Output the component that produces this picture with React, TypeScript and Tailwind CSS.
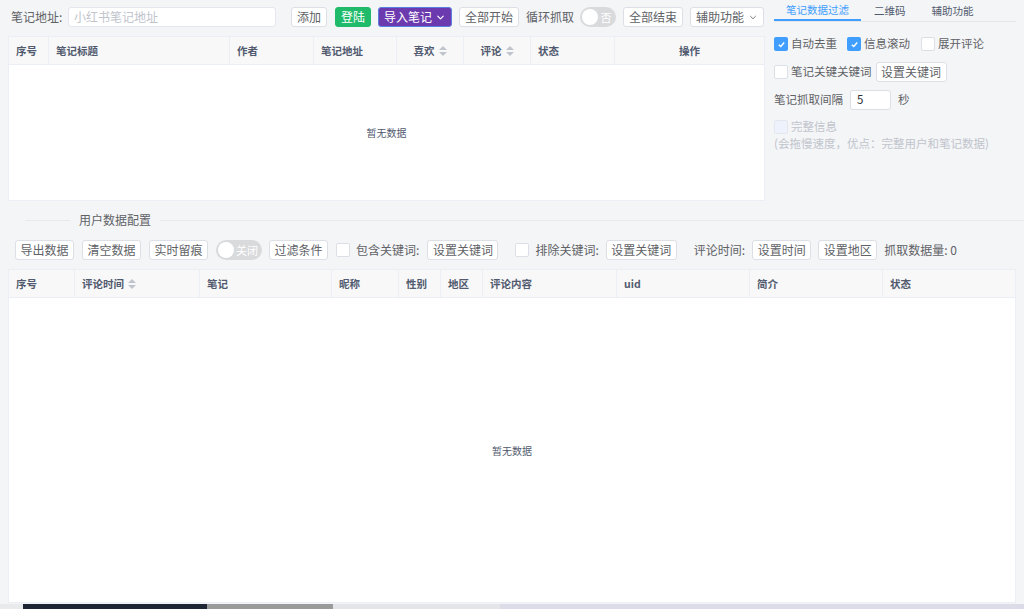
import { ChevronDown } from "lucide-react";
import type { ReactNode } from "react";

const font = { fontFamily: '"Noto Sans CJK SC", "Noto Sans", sans-serif' };

function Btn({
  children,
  className = "",
  wide = false,
}: {
  children: ReactNode;
  className?: string;
  wide?: boolean;
}) {
  return (
    <button
      className={`h-[20px] ${wide ? "px-[5px]" : "px-[4.5px]"} flex items-center shrink-0 border rounded-[3px] text-[12px] leading-none whitespace-nowrap ${
        className.includes("tone-") ? "" : "bg-white border-[#dcdfe6] text-[#606266]"
      } ${className}`}
    >
      {children}
    </button>
  );
}

function Check({ checked = false, disabled = false }: { checked?: boolean; disabled?: boolean }) {
  if (checked) {
    return (
      <span className="w-[14px] h-[14px] rounded-[2px] bg-[#409eff] flex items-center justify-center shrink-0">
        <svg width="9" height="9" viewBox="0 0 10 10">
          <path d="M2 5.2 L4.2 7.3 L8 2.8" fill="none" stroke="white" strokeWidth="1.6" />
        </svg>
      </span>
    );
  }
  return (
    <span
      className={`block w-[14px] h-[14px] rounded-[2px] border shrink-0 ${
        disabled ? "border-[#e4e7ed] bg-[#edf2fc]" : "border-[#dcdfe6] bg-white"
      }`}
    />
  );
}

function Toggle({ label, width }: { label: string; width: string }) {
  return (
    <span className={`h-[20px] ${width} rounded-full bg-[#d9dadc] flex items-center px-[2px] shrink-0`}>
      <span className="w-[16px] h-[16px] rounded-full bg-white" />
      <span className="flex-1 text-center text-[11px] leading-none text-white">{label}</span>
    </span>
  );
}

function SortIcon() {
  return (
    <span className="inline-flex flex-col gap-[2px] ml-[4px]">
      <span className="w-0 h-0 border-x-[4px] border-x-transparent border-b-[4px] border-b-[#c0c4cc]" />
      <span className="w-0 h-0 border-x-[4px] border-x-transparent border-t-[4px] border-t-[#c0c4cc]" />
    </span>
  );
}

type Col = { title: string; w: string; sort?: boolean; center?: boolean };

const noteCols: Col[] = [
  { title: "序号", w: "w-[40px]" },
  { title: "笔记标题", w: "w-[181px]" },
  { title: "作者", w: "w-[84px]" },
  { title: "笔记地址", w: "w-[83px]" },
  { title: "喜欢", w: "w-[67px]", sort: true, center: true },
  { title: "评论", w: "w-[67px]", sort: true, center: true },
  { title: "状态", w: "w-[84px]" },
  { title: "操作", w: "flex-1", center: true },
];

const userCols: Col[] = [
  { title: "序号", w: "w-[66px]" },
  { title: "评论时间", w: "w-[125px]", sort: true },
  { title: "笔记", w: "w-[132px]" },
  { title: "昵称", w: "w-[67px]" },
  { title: "性别", w: "w-[42px]" },
  { title: "地区", w: "w-[42px]" },
  { title: "评论内容", w: "w-[134px]" },
  { title: "uid", w: "w-[133px]" },
  { title: "简介", w: "w-[133px]" },
  { title: "状态", w: "flex-1" },
];

function Table({ cols, className }: { cols: Col[]; className: string }) {
  return (
    <div className={`flex flex-col bg-white border border-[#ebeef5] ${className}`}>
      <div className="flex h-[28px] bg-[#f8f8f9] border-b border-[#ebeef5] shrink-0">
        {cols.map((c, i) => (
          <div
            key={c.title}
            className={`${c.w} flex items-center px-[7px] text-[10.5px] font-semibold text-[#515a6e] ${
              c.center ? "justify-center" : ""
            } ${i < cols.length - 1 ? "border-r border-[#ebeef5]" : ""}`}
          >
            {c.title}
            {c.sort && <SortIcon />}
          </div>
        ))}
      </div>
      <div className="flex-1 flex items-center justify-center text-[10px] text-[#515a6e]">暂无数据</div>
    </div>
  );
}

export default function App() {
  return (
    <div style={font} className="w-[1024px] h-[609px] bg-[#f4f5f7] overflow-hidden flex flex-col">
      {/* note crawling area */}
      <div className="h-[210px] flex shrink-0">
        <div className="w-[757px] ml-[8px] flex flex-col">
          <div className="mt-[7px] h-[20px] flex items-center text-[12px] text-[#606266] whitespace-nowrap">
            <span className="ml-[3px] w-[57px] shrink-0">笔记地址:</span>
            <div className="w-[208px] h-[20px] shrink-0 bg-white border border-[#e4e7ed] rounded-[3px] flex items-center pl-[5px] text-[#c0c4cc]">
              小红书笔记地址
            </div>
            <Btn wide className="ml-[15px]">添加</Btn>
            <Btn wide className="tone- ml-[8px] bg-[#1fbb6a] border-[#1fbb6a] text-white">登陆</Btn>
            <Btn wide className="tone- ml-[7px] bg-[#6b3aae] border-[#5b7fe0] text-white gap-[3px]">
              导入笔记
              <ChevronDown size={11} strokeWidth={2.5} />
            </Btn>
            <Btn wide className="ml-[7px]">全部开始</Btn>
            <span className="ml-[7px] shrink-0">循环抓取</span>
            <span className="ml-[6px] shrink-0">
              <Toggle label="否" width="w-[36px]" />
            </span>
            <Btn wide className="ml-[7px]">全部结束</Btn>
            <Btn wide className="ml-[7px] gap-[4px] w-[74px] justify-center">
              辅助功能
              <ChevronDown size={11} strokeWidth={2} />
            </Btn>
          </div>
          <Table cols={noteCols} className="mt-[9px] h-[165px]" />
        </div>

        <div className="ml-[9px] w-[242px] flex flex-col text-[11.5px] text-[#606266] whitespace-nowrap">
          <div className="h-[22px] flex border-b border-[#e4e7ed] text-[10.5px]">
            <div className="flex items-center text-[#409eff] border-b-2 border-[#409eff] w-[87px] justify-center">
              笔记数据过滤
            </div>
            <div className="px-[13px] flex items-center text-[#515a6e]">二维码</div>
            <div className="px-[13px] flex items-center text-[#515a6e]">辅助功能</div>
          </div>
          <div className="mt-[12px] h-[20px] flex items-center">
            <Check checked />
            <span className="ml-[3px]">自动去重</span>
            <span className="ml-[10px]"><Check checked /></span>
            <span className="ml-[3px]">信息滚动</span>
            <span className="ml-[11px]"><Check /></span>
            <span className="ml-[3px]">展开评论</span>
          </div>
          <div className="mt-[8px] h-[20px] flex items-center">
            <Check />
            <span className="ml-[3px]">笔记关键关键词</span>
            <Btn className="ml-[4px]">设置关键词</Btn>
          </div>
          <div className="mt-[8px] h-[20px] flex items-center">
            <span>笔记抓取间隔</span>
            <div className="ml-[7px] w-[41px] h-[20px] bg-white border border-[#dcdfe6] rounded-[3px] flex items-center pl-[6px] text-[#303133]">
              5
            </div>
            <span className="ml-[7px]">秒</span>
          </div>
          <div className="mt-[9px] h-[16px] flex items-center text-[#c0c4cc]">
            <Check disabled />
            <span className="ml-[3px]">完整信息</span>
          </div>
          <div className="mt-[1px] h-[16px] flex items-center text-[#c0c4cc]">
            (会拖慢速度，优点：完整用户和笔记数据)
          </div>
        </div>
      </div>

      {/* user data divider */}
      <div className="h-[20px] flex items-center shrink-0 pl-[25px]">
        <div className="w-[45px] h-px bg-[#e7e9ec]" />
        <span className="px-[9px] text-[12px] text-[#606266]">用户数据配置</span>
        <div className="flex-1 h-px bg-[#e7e9ec]" />
      </div>

      {/* user data toolbar */}
      <div className="mt-[10px] h-[20px] flex items-center pl-[15px] text-[12px] text-[#606266] shrink-0 whitespace-nowrap">
        <Btn>导出数据</Btn>
        <Btn className="ml-[8px]">清空数据</Btn>
        <Btn className="ml-[8px]">实时留痕</Btn>
        <span className="ml-[8px]">
          <Toggle label="关闭" width="w-[46px]" />
        </span>
        <Btn className="ml-[7px]">过滤条件</Btn>
        <span className="ml-[8px]"><Check /></span>
        <span className="ml-[6px]">包含关键词:</span>
        <Btn className="ml-[8px]">设置关键词</Btn>
        <span className="ml-[17px]"><Check /></span>
        <span className="ml-[6px]">排除关键词:</span>
        <Btn className="ml-[7px]">设置关键词</Btn>
        <span className="ml-[17px]">评论时间:</span>
        <Btn className="ml-[7px]">设置时间</Btn>
        <Btn className="ml-[7px]">设置地区</Btn>
        <span className="ml-[7px]">抓取数据量: 0</span>
      </div>

      <Table cols={userCols} className="mt-[9px] mx-[8px] flex-1" />

      {/* window strip */}
      <div className="mt-[1px] h-[5px] flex shrink-0">
        <div className="w-[23px] bg-[#e9eaec]" />
        <div className="w-[184px] bg-[#1e2635]" />
        <div className="w-[126px] bg-[#9a9a9a]" />
        <div className="w-[167px] bg-[#e4e5e8]" />
        <div className="flex-1 bg-[#dcdce8]" />
      </div>
    </div>
  );
}
